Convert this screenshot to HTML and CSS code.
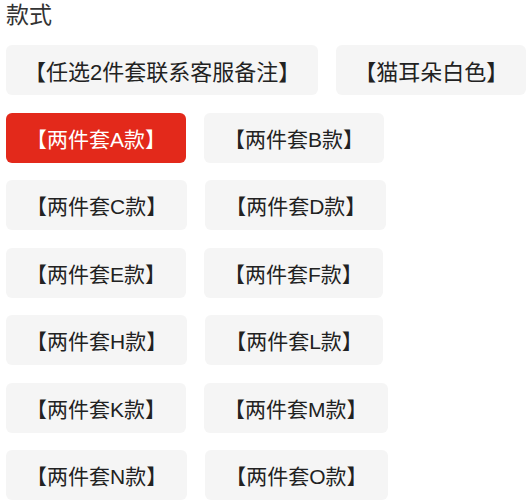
FILE: index.html
```html
<!DOCTYPE html>
<html lang="zh-CN">
<head>
<meta charset="utf-8">
<link rel="stylesheet" href="styles.css">
</head>
<body>
<div class="sku">
  <div class="sku-title">款式</div>
  <div class="sku-list">
    <div class="sku-row sku-row--lg">
      <div class="sku-item">【任选2件套联系客服备注】</div>
      <div class="sku-item">【猫耳朵白色】</div>
    </div>
    <div class="sku-row">
      <div class="sku-item sku-item--active">【两件套A款】</div>
      <div class="sku-item">【两件套B款】</div>
    </div>
    <div class="sku-row">
      <div class="sku-item">【两件套C款】</div>
      <div class="sku-item">【两件套D款】</div>
    </div>
    <div class="sku-row">
      <div class="sku-item">【两件套E款】</div>
      <div class="sku-item">【两件套F款】</div>
    </div>
    <div class="sku-row">
      <div class="sku-item">【两件套H款】</div>
      <div class="sku-item">【两件套L款】</div>
    </div>
    <div class="sku-row">
      <div class="sku-item">【两件套K款】</div>
      <div class="sku-item">【两件套M款】</div>
    </div>
    <div class="sku-row">
      <div class="sku-item">【两件套N款】</div>
      <div class="sku-item">【两件套O款】</div>
    </div>
  </div>
</div>
</body>
</html>
```
FILE: styles.css
```css
html, body {
  margin: 0;
  padding: 0;
  background: #ffffff;
}
body {
  font-family: "Liberation Sans", "Noto Sans CJK SC", sans-serif;
  color: #222222;
}
.sku {
  padding: 0 6px;
}
.sku-title {
  font-size: 23px;
  line-height: 30px;
  color: #333333;
  margin-bottom: 15px;
}
.sku-list {
  display: flex;
  flex-direction: column;
  row-gap: 17.5px;
}
.sku-row {
  display: flex;
  column-gap: 18px;
}
.sku-item {
  height: 50px;
  box-sizing: border-box;
  padding: 0 20px;
  display: flex;
  align-items: center;
  justify-content: center;
  font-size: 21px;
  background: #f5f5f5;
  border-radius: 6px;
  white-space: nowrap;
  color: #222222;
}
.sku-row--lg .sku-item {
  font-size: 22px;
  padding: 0 18px;
}
.sku-item--active {
  background: #e3291b;
  color: #ffffff;
}
```
